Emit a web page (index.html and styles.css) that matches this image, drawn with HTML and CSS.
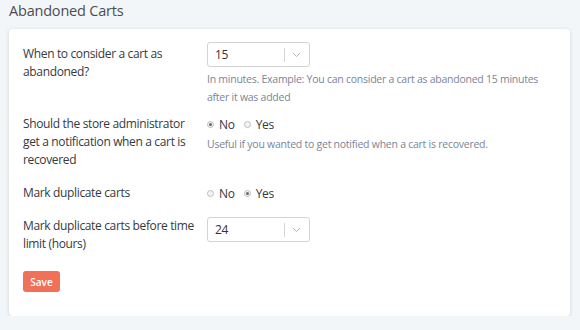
FILE: index.html
```html
<!DOCTYPE html>
<html lang="en">
<head>
    <meta charset="UTF-8">
    <title>Abandoned Carts</title>
    <link rel="stylesheet" href="styles.css">
</head>
<body>

    <h2 class="page-title">Abandoned Carts</h2>

    <div class="card">
        <div class="form-row">
            <label class="form-label">When to consider a cart as abandoned?</label>
            <div class="form-field">
                <div class="select">
                    <span class="select-value">15</span>
                    <span class="select-sep"></span>
                    <svg class="select-arrow" width="9" height="6" viewBox="0 0 9 6"><path d="M1 1l3.5 3.5L8 1" fill="none" stroke="#b5b5b5" stroke-width="1"/></svg>
                </div>
                <p class="help">In minutes. Example: You can consider a cart as abandoned 15 minutes after it was added</p>
            </div>
        </div>

        <div class="form-row">
            <label class="form-label">Should the store administrator get a notification when a cart is recovered</label>
            <div class="form-field">
                <div class="radios">
                    <span class="radio checked"></span><span class="radio-text">No</span>
                    <span class="radio"></span><span class="radio-text">Yes</span>
                </div>
                <p class="help help-one">Useful if you wanted to get notified when a cart is recovered.</p>
            </div>
        </div>

        <div class="form-row">
            <label class="form-label">Mark duplicate carts</label>
            <div class="form-field">
                <div class="radios">
                    <span class="radio"></span><span class="radio-text">No</span>
                    <span class="radio checked"></span><span class="radio-text">Yes</span>
                </div>
            </div>
        </div>

        <div class="form-row">
            <label class="form-label">Mark duplicate carts before time limit (hours)</label>
            <div class="form-field">
                <div class="select select-low">
                    <span class="select-value">24</span>
                    <span class="select-sep"></span>
                    <svg class="select-arrow" width="9" height="6" viewBox="0 0 9 6"><path d="M1 1l3.5 3.5L8 1" fill="none" stroke="#b5b5b5" stroke-width="1"/></svg>
                </div>
            </div>
        </div>

        <button class="btn-save">Save</button>
    </div>

</body>
</html>
```

FILE: styles.css
```css
* {
    margin: 0;
    padding: 0;
    box-sizing: border-box;
    font-family: 'Open Sans', sans-serif;
}
body {
    background: #f3f6f9;
    padding: 0 10px 0 9px;
}
.page-title {
    font-size: 14.5px;
    font-weight: 400;
    letter-spacing: -0.2px;
    line-height: 22px;
    color: #4d4d4d;
    margin-bottom: 7px;
}
.card {
    background: #fff;
    border-radius: 4px;
    box-shadow: 0 1px 4px rgba(0, 0, 0, 0.14);
    padding: 16px 14px 24px;
}
.form-row {
    display: flex;
    margin-bottom: 9px;
}
.form-label {
    width: 184px;
    flex-shrink: 0;
    padding-right: 10px;
    padding-bottom: 6px;
    font-size: 12px;
    letter-spacing: -0.35px;
    line-height: 18px;
    color: #353a40;
}
.form-field {
    flex: 1;
}
.select {
    display: flex;
    align-items: center;
    width: 103px;
    height: 25px;
    margin-top: -3px;
    border: 1px solid #d3d3d3;
    border-radius: 3px;
    padding-left: 7px;
}
.select-low {
    margin-top: 0;
}
.select-value {
    flex: 1;
    font-size: 12px;
    letter-spacing: -0.3px;
    color: #333;
}
.select-sep {
    width: 1px;
    height: 14px;
    background: #d6d6d6;
}
.select-arrow {
    margin: 0 8px 0 7px;
}
.help {
    margin-top: 3px;
    font-size: 10.5px;
    letter-spacing: -0.25px;
    line-height: 18px;
    color: #7a8597;
}
.help-one {
    margin-top: 2px;
}
.radios {
    display: flex;
    align-items: center;
    height: 18px;
    font-size: 12px;
    letter-spacing: -0.3px;
    color: #353a40;
}
.radio {
    width: 7px;
    height: 7px;
    border: 1px solid #bdbdbd;
    border-radius: 50%;
    background: #f4f4f4;
    margin-right: 5px;
    position: relative;
}
.radio.checked::after {
    content: "";
    position: absolute;
    left: 1px;
    top: 1px;
    width: 3px;
    height: 3px;
    border-radius: 50%;
    background: #666;
}
.radio-text {
    margin-right: 9px;
}
.btn-save {
    margin-top: 3px;
    width: 37px;
    height: 21px;
    border: none;
    border-radius: 3px;
    background: #f07157;
    color: #fff;
    font-size: 10px;
    font-weight: 600;
    cursor: pointer;
}
```
